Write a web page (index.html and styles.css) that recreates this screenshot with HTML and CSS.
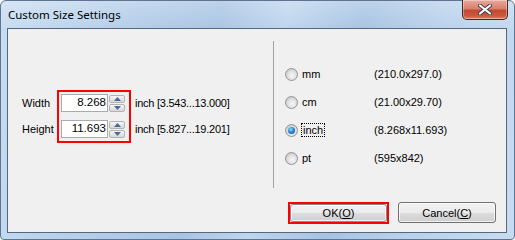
FILE: index.html
```html
<!DOCTYPE html>
<html>
<head>
<meta charset="utf-8">
<link rel="stylesheet" href="styles.css">
</head>
<body>
<div class="window">
  <div class="titlebar">
    <span class="title">Custom Size Settings</span>
    <div class="close">
      <svg width="14" height="11" viewBox="0 0 14 11">
        <path d="M2 1.5 L12 9.5 M12 1.5 L2 9.5" stroke="#3a3f4a" stroke-width="4" stroke-linecap="round"/>
        <path d="M2 1.5 L12 9.5 M12 1.5 L2 9.5" stroke="#ffffff" stroke-width="2.2" stroke-linecap="round"/>
      </svg>
    </div>
  </div>
  <div class="panel">
    <div class="main">
      <div class="left">
        <div class="form">
          <div class="col labels">
            <div class="row">Width</div>
            <div class="row">Height</div>
          </div>
          <div class="redbox">
            <div class="spin">
              <div class="edit">8.268</div>
              <div class="updown">
                <div class="ud"><svg width="7" height="4" viewBox="0 0 7 4"><path d="M0 4 L3.5 0 L7 4 Z" fill="#4a6a9c"/></svg></div>
                <div class="ud"><svg width="7" height="4" viewBox="0 0 7 4"><path d="M0 0 L7 0 L3.5 4 Z" fill="#4a6a9c"/></svg></div>
              </div>
            </div>
            <div class="spin">
              <div class="edit">11.693</div>
              <div class="updown">
                <div class="ud"><svg width="7" height="4" viewBox="0 0 7 4"><path d="M0 4 L3.5 0 L7 4 Z" fill="#4a6a9c"/></svg></div>
                <div class="ud"><svg width="7" height="4" viewBox="0 0 7 4"><path d="M0 0 L7 0 L3.5 4 Z" fill="#4a6a9c"/></svg></div>
              </div>
            </div>
          </div>
          <div class="col ranges">
            <div class="row">inch [3.543...13.000]</div>
            <div class="row">inch [5.827...19.201]</div>
          </div>
        </div>
      </div>
      <div class="sep"></div>
      <div class="right">
        <div class="opt"><span class="radio"></span><span class="oname">mm</span><span class="oval">(210.0x297.0)</span></div>
        <div class="opt"><span class="radio"></span><span class="oname">cm</span><span class="oval">(21.00x29.70)</span></div>
        <div class="opt"><span class="radio checked"></span><span class="oname"><span class="focus">inch</span></span><span class="oval">(8.268x11.693)</span></div>
        <div class="opt"><span class="radio"></span><span class="oname">pt</span><span class="oval">(595x842)</span></div>
      </div>
    </div>
    <div class="buttons">
      <div class="redbtn"><div class="btn ok">OK(<u>O</u>)</div></div>
      <div class="btn cancel">Cancel(<u>C</u>)</div>
    </div>
  </div>
</div>
</body>
</html>
```

FILE: styles.css
```css
html, body {
  margin: 0;
  padding: 0;
  background: #ffffff;
}

.window {
  box-sizing: border-box;
  width: 515px;
  height: 240px;
  border: 1px solid #5d7591;
  border-radius: 6px 6px 4px 4px;
  background:
    linear-gradient(to bottom, rgba(255,255,255,0.25), rgba(255,255,255,0) 30px),
    linear-gradient(100deg, #c9ddf1 0%, #b6cfea 20%, #a9c4e3 40%, #bed5ed 52%, #a7c3e2 66%, #b9d1eb 80%, #c8dcf1 100%);
  padding: 0 7px 6px 6px;
  display: flex;
  flex-direction: column;
  font-family: "Liberation Sans", Arial, sans-serif;
  font-size: 11px;
  color: #000;
}

.titlebar {
  height: 27px;
  display: flex;
  align-items: flex-start;
  position: relative;
}

.title {
  font-family: "Noto Sans", "Open Sans", sans-serif;
  font-size: 11.5px;
  margin-top: 6px;
  margin-left: 1px;
  color: #000;
}

.close {
  position: absolute;
  right: -1px;
  top: -1px;
  box-sizing: border-box;
  width: 46px;
  height: 20px;
  border: 1px solid #4b2622;
  border-top: none;
  border-radius: 0 0 5px 5px;
  background: linear-gradient(to bottom, #e9a99a 0%, #d9806c 45%, #c14a32 55%, #cc5a3e 85%, #e08a6a 100%);
  box-shadow: inset 0 0 0 1px rgba(255,255,255,0.35);
  display: flex;
  align-items: center;
  justify-content: center;
}

.panel {
  box-sizing: border-box;
  width: 500px;
  height: 205px;
  border: 1px solid #56687c;
  background: #f0f0f0;
  display: flex;
  flex-direction: column;
}

.main {
  display: flex;
  padding-top: 12px;
  height: 147px;
}

.left {
  width: 265px;
  padding-top: 49px;
  padding-left: 14px;
  box-sizing: border-box;
}

.form {
  display: flex;
  align-items: flex-start;
}

.col {
  display: flex;
  flex-direction: column;
  gap: 8px;
  padding-top: 4px;
}

.row {
  height: 18px;
  line-height: 18px;
  white-space: nowrap;
}

.labels {
  width: 35px;
}

.ranges {
  margin-left: 4px;
  letter-spacing: -0.25px;
}

.redbox {
  border: 2px solid #ff0000;
  padding: 2px 4px 3px 2px;
  display: flex;
  flex-direction: column;
  gap: 8px;
}

.spin {
  display: flex;
  gap: 1px;
  height: 18px;
}

.edit {
  box-sizing: border-box;
  width: 47px;
  height: 18px;
  border: 1px solid #a9abb0;
  background: #fff;
  text-align: right;
  padding-right: 1px;
  line-height: 15px;
  font-size: 11.5px;
}

.updown {
  width: 16px;
  display: flex;
  flex-direction: column;
  gap: 1px;
  padding-top: 1px;
}

.ud {
  box-sizing: border-box;
  flex: 1;
  border: 1px solid #b3b3b3;
  border-radius: 2px;
  background: linear-gradient(to bottom, #f7f7f7, #e6e6e6 50%, #d8d8d8);
  display: flex;
  align-items: center;
  justify-content: center;
}

.sep {
  width: 1px;
  background: #a0a0a0;
}

.right {
  padding-top: 19px;
  padding-left: 11px;
  display: flex;
  flex-direction: column;
}

.opt {
  height: 28px;
  display: flex;
  align-items: center;
}

.radio {
  box-sizing: border-box;
  width: 13px;
  height: 13px;
  border-radius: 50%;
  border: 1px solid #949494;
  background: radial-gradient(circle at 55% 60%, #f6f6f6 0, #e4e4e4 40%, #cfcfcf 70%, #e9e9e9 100%);
  margin-right: 4px;
  display: flex;
  align-items: center;
  justify-content: center;
}

.radio.checked::after {
  content: "";
  width: 7px;
  height: 7px;
  border-radius: 50%;
  background: radial-gradient(circle at 40% 35%, #8fe0ff 0, #2a8ad6 45%, #1a3f7a 100%);
}

.oname {
  width: 72px;
}

.focus {
  outline: 1px dotted #000;
  outline-offset: 0;
  padding: 0 1px;
}

.buttons {
  display: flex;
  justify-content: flex-end;
  align-items: flex-start;
  gap: 9px;
  padding-top: 14px;
  padding-right: 10px;
}

.redbtn {
  border: 2px solid #ff0000;
  width: 97px;
  height: 18px;
  display: flex;
}

.btn {
  box-sizing: border-box;
  border: 1px solid #707070;
  border-radius: 3px;
  background: linear-gradient(to bottom, #f2f2f2 0%, #ebebeb 50%, #dddddd 50%, #cfcfcf 100%);
  box-shadow: inset 0 0 0 1px rgba(255,255,255,0.7);
  display: flex;
  align-items: center;
  justify-content: center;
  font-size: 11px;
}

.btn u {
  text-underline-offset: 1px;
}

.ok {
  width: 97px;
  height: 18px;
  border-color: #8a8a8a;
}

.cancel {
  width: 98px;
  height: 21px;
}
```
